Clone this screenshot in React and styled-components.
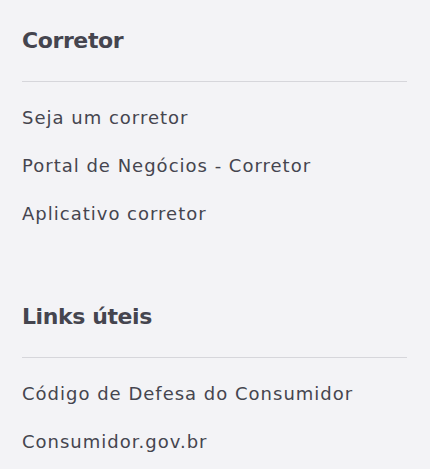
import styled, { createGlobalStyle } from "styled-components";

const GlobalStyle = createGlobalStyle`
  html, body {
    margin: 0;
    padding: 0;
    background-color: #f3f3f6;
  }
`;

const sections = [
  {
    title: "Corretor",
    links: ["Seja um corretor", "Portal de Negócios - Corretor", "Aplicativo corretor"],
  },
  {
    title: "Links úteis",
    links: ["Código de Defesa do Consumidor", "Consumidor.gov.br"],
  },
];

export default function App() {
  return (
    <>
      <GlobalStyle />
      <Wrapper>
        {sections.map((section) => (
          <Section key={section.title}>
            <Title>{section.title}</Title>
            <Divider />
            <List>
              {section.links.map((link) => (
                <li key={link}>
                  <Link href="#">{link}</Link>
                </li>
              ))}
            </List>
          </Section>
        ))}
      </Wrapper>
    </>
  );
}

const Wrapper = styled.div`
  display: flex;
  flex-direction: column;
  gap: 75px;
  padding: 25px 23px 0 22px;
  font-family: "DejaVu Sans", "Noto Sans", sans-serif;
  color: #45454f;
`;

const Section = styled.section`
  display: flex;
  flex-direction: column;
`;

const Title = styled.h3`
  margin: 0;
  font-size: 22px;
  line-height: 32px;
  font-weight: 700;
  letter-spacing: -0.4px;
  color: #45454f;
`;

const Divider = styled.hr`
  margin: 24px 0 0;
  border: none;
  height: 1px;
  background-color: #d6d6db;
`;

const List = styled.ul`
  list-style: none;
  margin: 24px 0 0;
  padding: 0;
  display: flex;
  flex-direction: column;
  gap: 24px;
`;

const Link = styled.a`
  display: block;
  font-size: 18px;
  line-height: 24px;
  letter-spacing: 1px;
  color: #45454f;
  text-decoration: none;
`;
